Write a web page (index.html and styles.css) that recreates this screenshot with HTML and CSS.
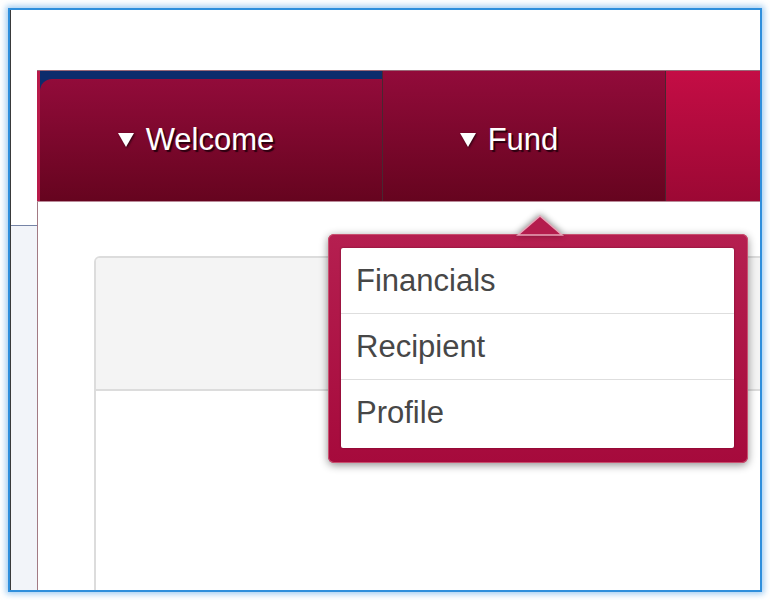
FILE: index.html
```html
<!DOCTYPE html>
<html lang="en">
<head>
    <meta charset="UTF-8">
    <meta name="viewport" content="width=device-width, initial-scale=1.0">
    <title>Fund Menu</title>
    <link rel="stylesheet" href="styles.css">
</head>
<body>

<div class="frame">
    <div class="side">
        <div class="side-top"></div>
        <div class="side-bottom"></div>
    </div>

    <div class="main">
        <div class="main-top"></div>

        <nav class="nav">
            <div class="tab tab-first">
                <div class="tab-face">
                    <span class="caret"></span>
                    <span class="tab-label">Welcome</span>
                </div>
            </div>
            <div class="tab tab-fund">
                <div class="tab-face">
                    <span class="caret"></span>
                    <span class="tab-label">Fund</span>
                </div>
            </div>
            <div class="tab tab-more"></div>
        </nav>

        <div class="content">
            <div class="card">
                <div class="card-header"></div>
                <div class="card-body"></div>
            </div>
        </div>
    </div>

    <div class="dropdown">
        <svg class="dropdown-arrow" width="50" height="22" viewBox="0 0 50 22">
            <polygon points="3,21 25,2 47,21" fill="#b41c4d" stroke="#e8a4b8" stroke-width="1.5"/>
        </svg>
        <ul class="dropdown-menu">
            <li>Financials</li>
            <li>Recipient</li>
            <li>Profile</li>
        </ul>
    </div>
</div>

</body>
</html>
```

FILE: styles.css
```css
body {
    margin: 0;
    padding: 8px;
    background-color: #fff;
    font-family: 'Liberation Sans', Arial, sans-serif;
}

.frame {
    position: relative;
    width: 750px;
    height: 580px;
    border: 2px solid #2f8fdc;
    box-shadow: 0 0 6px 2px rgba(80, 160, 230, 0.55);
    display: flex;
    overflow: hidden;
}

.side {
    width: 26px;
    flex: none;
    display: flex;
    flex-direction: column;
    border-left: 1px solid #3a3a3a;
}

.side-top {
    height: 215px;
    flex: none;
    background-color: #fff;
    border-bottom: 1px solid #7684a6;
}

.side-bottom {
    flex: 1;
    background-color: #f2f4f9;
}

.main {
    flex: 1;
    display: flex;
    flex-direction: column;
    min-width: 0;
}

.main-top {
    height: 60px;
    flex: none;
    background-color: #fff;
}

.nav {
    display: flex;
    flex: none;
    height: 130px;
    border-top: 1px solid #9a6a78;
    border-bottom: 1px solid #b98a98;
}

.tab {
    display: flex;
    border-right: 1px solid #4a2630;
}

.tab-first {
    width: 342px;
    background-color: #0c2c6c;
    border-left: 3px solid #b81a4a;
    flex-direction: column;
}

.tab-first .tab-face {
    margin-top: 8px;
    border-top-left-radius: 12px;
}

.tab-fund {
    width: 282px;
}

.tab-face {
    flex: 1;
    display: flex;
    align-items: center;
    justify-content: center;
    padding-right: 30px;
    gap: 12px;
    background: linear-gradient(#920b3a, #66041f);
}

.tab-fund .tab-face {
    padding-top: 8px;
}

.tab-more {
    flex: 1;
    border-right: none;
    background: linear-gradient(#c40d45, #9c0834);
}

.caret {
    width: 0;
    height: 0;
    border-left: 8px solid transparent;
    border-right: 8px solid transparent;
    border-top: 14px solid #fff;
    filter: drop-shadow(1px 1px 1px #2a0010);
}

.tab-label {
    color: #fff;
    font-size: 31px;
    text-shadow: 2px 2px 1px #2a0010;
}

.content {
    flex: 1;
    min-height: 0;
    border-left: 1px solid #a27a84;
    padding: 54px 0 0 56px;
    background-color: #fff;
}

.card {
    width: 690px;
    height: 400px;
    border: 2px solid #dcdcdc;
    border-radius: 6px;
    overflow: hidden;
}

.card-header {
    height: 131px;
    background-color: #f4f4f4;
    border-bottom: 2px solid #dcdcdc;
}

.card-body {
    background-color: #fff;
}

.dropdown {
    position: absolute;
    left: 318px;
    top: 224px;
    width: 420px;
    height: 229px;
    box-sizing: border-box;
    padding: 14px 14px 15px 13px;
    border-radius: 6px;
    background: linear-gradient(#b51f50, #a60a3c);
    box-shadow: inset 0 0 0 1px #c8506f, 0 2px 8px rgba(0, 0, 0, 0.45);
}

.dropdown-arrow {
    position: absolute;
    left: 187px;
    top: -20px;
    filter: drop-shadow(0 -1px 3px rgba(0, 0, 0, 0.45));
}

.dropdown-menu {
    list-style: none;
    margin: 0;
    padding: 0;
    height: 100%;
    background-color: #fff;
    border-radius: 2px;
    box-shadow: 0 0 2px rgba(60, 0, 20, 0.6);
}

.dropdown-menu li {
    height: 65px;
    line-height: 65px;
    padding-left: 15px;
    font-size: 31px;
    color: #474747;
    border-bottom: 1px solid #dedede;
}

.dropdown-menu li:last-child {
    border-bottom: none;
}
```
